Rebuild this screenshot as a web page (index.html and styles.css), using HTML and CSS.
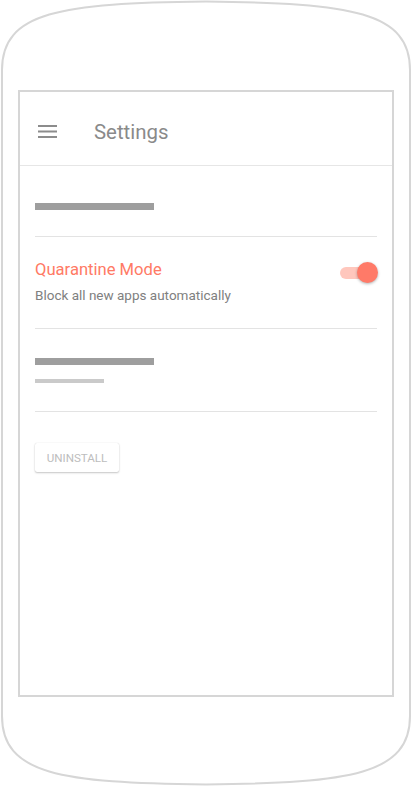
FILE: index.html
```html
<!DOCTYPE html>
<html>
<head>
<meta charset="utf-8">
<link rel="stylesheet" href="styles.css">
</head>
<body>
<div class="phone">
  <svg class="frame" width="412" height="786" viewBox="0 0 412 786">
    <path d="M2,70 C2,12 60,3 206,1.5 C352,3 410,12 410,70 L410,716 C410,774 352,783 206,784.5 C60,783 2,774 2,716 Z" fill="none" stroke="#d6d6d6" stroke-width="2"/>
  </svg>
  <div class="screen">
    <header class="appbar">
      <svg class="menu" width="19" height="13" viewBox="0 0 19 13">
        <rect x="0" y="0" width="19" height="2" fill="#8c8c8c"/>
        <rect x="0" y="5.5" width="19" height="2" fill="#8c8c8c"/>
        <rect x="0" y="11" width="19" height="2" fill="#8c8c8c"/>
      </svg>
      <h1 class="title">Settings</h1>
    </header>
    <main class="content">
      <section class="item item-one">
        <div class="bar bar-dark"></div>
      </section>
      <section class="item item-quarantine">
        <div class="text">
          <div class="q-title">Quarantine Mode</div>
          <div class="q-sub">Block all new apps automatically</div>
        </div>
        <div class="toggle">
          <div class="track"></div>
          <div class="thumb"></div>
        </div>
      </section>
      <section class="item item-three">
        <div class="bar bar-dark"></div>
        <div class="bar bar-light"></div>
      </section>
      <section class="item-action">
        <button class="btn">UNINSTALL</button>
      </section>
    </main>
  </div>
</div>
</body>
</html>
```
FILE: styles.css
```css
html, body {
  margin: 0;
  padding: 0;
  background: #ffffff;
}
body {
  font-family: Roboto, "Liberation Sans", sans-serif;
}
.phone {
  position: relative;
  width: 412px;
  height: 786px;
  padding: 90px 18px 0 18px;
  box-sizing: border-box;
}
.frame {
  position: absolute;
  left: 0;
  top: 0;
}
.screen {
  position: relative;
  width: 376px;
  height: 607px;
  box-sizing: border-box;
  border: 2px solid #d6d6d6;
  background: #fff;
  display: flex;
  flex-direction: column;
}
.appbar {
  height: 73px;
  border-bottom: 1px solid #e6e6e6;
  display: flex;
  align-items: center;
  padding-left: 18px;
  box-sizing: content-box;
}
.menu {
  display: block;
  margin-top: 6px;
}
.title {
  margin: 0 0 0 37px;
  font-weight: 400;
  font-size: 20.4px;
  color: #8a8a8a;
  line-height: 24px;
  padding-top: 6px;
}
.content {
  padding: 0 15px;
  display: flex;
  flex-direction: column;
}
.item {
  border-bottom: 1px solid #e3e3e3;
}
.item-one {
  padding-top: 37px;
  height: 71px;
  box-sizing: border-box;
}
.bar {
  background: #9e9e9e;
}
.bar-dark {
  width: 119px;
  height: 7px;
}
.bar-light {
  width: 69px;
  height: 4px;
  background: #cacaca;
  margin-top: 14px;
}
.item-quarantine {
  height: 92px;
  box-sizing: border-box;
  padding-top: 23px;
  display: flex;
  justify-content: space-between;
  align-items: flex-start;
}
.q-title {
  font-size: 16.6px;
  line-height: 20px;
  color: #ff7a65;
}
.q-sub {
  margin-top: 5px;
  font-size: 13.5px;
  line-height: 20px;
  color: #808080;
}
.toggle {
  position: relative;
  width: 38px;
  height: 22px;
  margin-top: 2px;
  margin-right: -1px;
}
.track {
  position: absolute;
  left: 0;
  top: 5px;
  width: 34px;
  height: 12px;
  border-radius: 6px;
  background: #ffc7bd;
}
.thumb {
  position: absolute;
  right: 0;
  top: 0;
  width: 21px;
  height: 21px;
  border-radius: 50%;
  background: #ff7a68;
  box-shadow: 0 1px 3px rgba(0,0,0,0.3);
}
.item-three {
  height: 83px;
  box-sizing: border-box;
  padding-top: 29px;
}
.item-action {
  padding-top: 31px;
}
.btn {
  width: 84px;
  height: 29px;
  border: none;
  border-radius: 2px;
  background: #fff;
  box-shadow: 0 1px 2px rgba(0,0,0,0.22), 0 0 1px rgba(0,0,0,0.15);
  font-family: Roboto, "Liberation Sans", sans-serif;
  font-size: 11.6px;
  font-weight: 400;
  color: #bdbdbd;
  letter-spacing: 0;
  padding: 0;
}
```
